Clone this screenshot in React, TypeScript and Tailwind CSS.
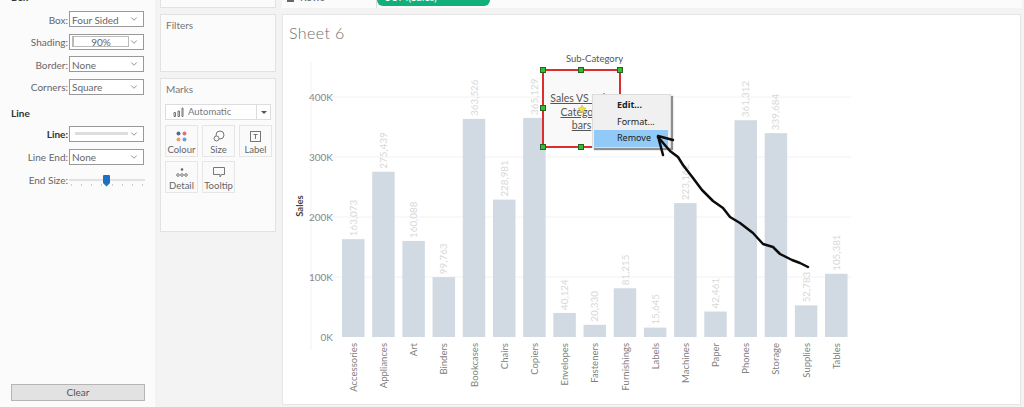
import { ChevronDown } from "lucide-react";

const bars = [
  { name: "Accessories", value: 163073, label: "163,073" },
  { name: "Appliances", value: 275439, label: "275,439" },
  { name: "Art", value: 160088, label: "160,088" },
  { name: "Binders", value: 99763, label: "99,763" },
  { name: "Bookcases", value: 363526, label: "363,526" },
  { name: "Chairs", value: 228981, label: "228,981" },
  { name: "Copiers", value: 365129, label: "365,129" },
  { name: "Envelopes", value: 40124, label: "40,124" },
  { name: "Fasteners", value: 20330, label: "20,330" },
  { name: "Furnishings", value: 81215, label: "81,215" },
  { name: "Labels", value: 15645, label: "15,645" },
  { name: "Machines", value: 223162, label: "223,162" },
  { name: "Paper", value: 42461, label: "42,461" },
  { name: "Phones", value: 361312, label: "361,312" },
  { name: "Storage", value: 339684, label: "339,684" },
  { name: "Supplies", value: 52783, label: "52,783" },
  { name: "Tables", value: 105381, label: "105,381" },
];

function Select({ label, value, bold }: { label: string; value: React.ReactNode; bold?: boolean }) {
  return (
    <div className="flex h-[16px] items-center">
      <div className={`w-[68px] pr-[1px] pt-[2px] text-right text-[10px] ${bold ? "font-bold text-[#333]" : "text-[#666]"}`}>{label}</div>
      <div className="flex h-[16px] w-[75px] items-center border border-[#999] bg-white pl-[2px] pr-[4px] text-[10px] text-[#666]">
        <div className={`min-w-0 flex-1 ${typeof value === "string" ? "pt-[2px]" : ""}`}>{value}</div>
        <ChevronDown className="h-[10px] w-[10px] text-[#555]" strokeWidth={1.5} />
      </div>
    </div>
  );
}

function LeftPanel() {
  return (
    <div className="relative flex h-full w-[155px] shrink-0 flex-col bg-[#fbfbfb] pl-[1px]">
      <div className="absolute left-[11px] top-[-10px] text-[10px] font-bold text-[#333]">Box</div>
      <div className="mt-[11px] flex flex-col gap-[6.67px]">
        <Select label="Box:" value="Four Sided" />
        <Select label="Shading:" value={<div className="h-[11px] w-[57px] border border-l-2 border-[#bbb] text-center text-[10px] leading-[10px]">90%</div>} />
        <Select label="Border:" value="None" />
        <Select label="Corners:" value="Square" />
      </div>
      <div className="ml-[10px] mt-[11px] h-[14px] text-[10px] font-bold leading-[14px] text-[#333]">Line</div>
      <div className="mt-[6px] flex flex-col gap-[6.67px]">
        <Select label="Line:" bold value={<div className="ml-[3px] h-[3px] w-[53px] bg-[#ddd]" />} />
        <Select label="Line End:" value="None" />
      </div>
      <div className="mt-[6px] flex h-[18px] items-center">
        <div className="w-[68px] pr-[1px] pt-[2px] text-right text-[10px] text-[#666]">End Size:</div>
        <div className="relative h-full w-[76px]">
          <div className="mt-[8px] h-[2px] w-full bg-[#e2e2e2]" />
          <div className="mt-[3px] flex justify-between px-[2px]">
            {Array.from({ length: 8 }).map((_, i) => (
              <div key={i} className="h-[2px] w-[1px] bg-[#ccc]" />
            ))}
          </div>
          <svg className="absolute left-[34px] top-[4px]" width="7" height="12" viewBox="0 0 7 12">
            <path d="M0 1 Q0 0 1 0 H6 Q7 0 7 1 V8 L3.5 11.5 L0 8 Z" fill="#1f70c1" />
          </svg>
        </div>
      </div>
      <div className="flex-1" />
      <div className="mb-[6px] ml-[10px] flex h-[17px] w-[134px] items-center justify-center border border-[#b5b5b5] bg-[#e2e2e2] text-[10px] text-[#555]">Clear</div>
    </div>
  );
}

function MarkButton({ label, icon }: { label: string; icon: React.ReactNode }) {
  return (
    <div className="flex h-[32px] w-[33px] flex-col items-center border border-[#e6e6e6] bg-[#fafafa] pt-[3px] text-[9.5px] leading-[11px] text-[#666]">
      <div className="flex h-[14px] items-center">{icon}</div>
      <div className="mt-[1px] whitespace-nowrap">{label}</div>
    </div>
  );
}

function MarksCard() {
  return (
    <div className="mt-[6px] h-[154px] w-[116px] border border-[#e2e2e2] bg-[#fbfbfb] px-[4px]">
      <div className="ml-[1px] mt-[3px] h-[14px] text-[10px] leading-[14px] text-[#777]">Marks</div>
      <div className="mt-[8px] flex h-[16px] w-[106px] items-center border border-[#ddd] bg-white text-[9.5px] text-[#777]">
        <svg className="ml-[7px]" width="11" height="10" viewBox="0 0 11 10" fill="none" stroke="#777">
          <path d="M1 5.5h1.5v4h-1.5zM5 4h1.5v5.5h-1.5zM9 1h1v8.5h-1z" />
        </svg>
        <span className="ml-[4px] flex-1">Automatic</span>
        <div className="flex h-full w-[14px] items-center justify-center border-l border-[#ddd]">
          <div className="h-0 w-0 border-x-[3px] border-t-[3px] border-x-transparent border-t-[#555]" />
        </div>
      </div>
      <div className="mt-[5px] grid w-[107px] grid-cols-[33px_33px_33px] gap-x-[4px] gap-y-[4px]">
        <MarkButton
          label="Colour"
          icon={
            <svg width="11" height="11" viewBox="0 0 11 11">
              <circle cx="2.5" cy="2.5" r="2" fill="#5c6692" />
              <circle cx="8.5" cy="2.5" r="2" fill="#e0707d" />
              <circle cx="2.5" cy="8.5" r="2" fill="#eea05c" />
              <circle cx="8.5" cy="8.5" r="2" fill="#6a9fd0" />
            </svg>
          }
        />
        <MarkButton
          label="Size"
          icon={
            <svg width="12" height="12" viewBox="0 0 12 12" fill="none" stroke="#777">
              <circle cx="7" cy="5" r="4" fill="#fafafa" />
              <circle cx="3.5" cy="8.5" r="2.5" fill="#fafafa" />
            </svg>
          }
        />
        <MarkButton
          label="Label"
          icon={
            <svg width="11" height="11" viewBox="0 0 11 11" fill="none" stroke="#777">
              <rect x="0.5" y="0.5" width="10" height="10" />
              <path d="M3.5 3.5h4M5.5 3.5v4.5" />
            </svg>
          }
        />
        <MarkButton
          label="Detail"
          icon={
            <svg width="12" height="9" viewBox="0 0 12 9" fill="none" stroke="#777">
              <circle cx="6" cy="1.5" r="1.3" fill="#666" stroke="none" />
              <circle cx="2" cy="7" r="1.3" />
              <circle cx="6" cy="7" r="1.3" />
              <circle cx="10" cy="7" r="1.3" />
            </svg>
          }
        />
        <MarkButton
          label="Tooltip"
          icon={
            <svg width="12" height="11" viewBox="0 0 12 11" fill="none" stroke="#777">
              <path d="M0.5 0.5h11v7h-3l-1.5 2.5v-2.5h-6.5z" />
            </svg>
          }
        />
      </div>
    </div>
  );
}

function Chart() {
  // svg origin sits at page (283, 50)
  const base = 287;
  return (
    <svg width="737" height="352" viewBox="0 0 737 352" className="font-['Lato',sans-serif]">
      <line x1="28" y1="12" x2="28" y2="300" stroke="#f2f2f2" />
      {[400, 300, 200, 100].map((k) => (
        <line key={k} x1="28" x2="568" y1={base - k * 0.6} y2={base - k * 0.6} stroke="#f2f2f2" />
      ))}
      {[400, 300, 200, 100, 0].map((k) => (
        <text key={k} x="50" y={base - k * 0.6 + 3.5} textAnchor="end" fontSize="10" fill="#888">
          {k}K
        </text>
      ))}
      <text transform="translate(20 156) rotate(-90)" textAnchor="middle" fontSize="9.5" fontWeight="700" fill="#444">
        Sales
      </text>
      {bars.map((b, i) => {
        const x = 59 + i * 30.19;
        const h = (b.value / 100000) * 60;
        const cx = x + 11.3;
        return (
          <g key={b.name}>
            <rect x={x} y={base - h} width="22.5" height={h} fill="#d1dae3" />
            <text transform={`translate(${cx + 3.5} ${base - h - 3}) rotate(-90)`} fontSize="9.8" fill="#d8d8d8">
              {b.label}
            </text>
            <text transform={`translate(${cx + 3.5} ${base + 6}) rotate(-90)`} textAnchor="end" fontSize="9.5" fill="#808080">
              {b.name}
            </text>
          </g>
        );
      })}
    </svg>
  );
}

function Handle({ className }: { className: string }) {
  return <div className={`absolute h-[6px] w-[6px] border border-[#2a5f2a] bg-[#2fc02f] ${className}`} />;
}

function TitleBox() {
  return (
    <div className="absolute left-[259px] top-[54px] h-[79px] w-[79px] border-2 border-[#dc2e30] bg-[#f9f9f9] font-['Lato',sans-serif]">
      <div className="absolute left-[-27px] right-[-53px] top-[-18px] text-center text-[9.5px] leading-[12px] text-[#555]">Sub-Category</div>
      <div className="mt-[21px] text-center text-[10.5px] leading-[13.5px] text-[#555] underline">
        Sales VS Sub-
        <br />
        Category
        <br />
        bars
      </div>
      <Handle className="left-[-4px] top-[-4px]" />
      <Handle className="left-[34px] top-[-4px]" />
      <Handle className="right-[-4px] top-[-4px]" />
      <Handle className="left-[-4px] top-[34px]" />
      <Handle className="bottom-[-4px] left-[-4px]" />
      <Handle className="bottom-[-4px] left-[34px]" />
      <svg className="absolute left-[34px] top-[34px]" width="8" height="8" viewBox="0 0 8 8">
        <path d="M4 0 L5.2 2.8 L8 3.2 L5.8 5.2 L6.5 8 L4 6.5 L1.5 8 L2.2 5.2 L0 3.2 L2.8 2.8 Z" fill="#f2e24e" stroke="#b5a838" strokeWidth="0.5" />
      </svg>
    </div>
  );
}

function ContextMenu() {
  return (
    <div className="absolute left-[309px] top-[79px] h-[54px] w-[79px] border border-[#dcdcdc] bg-[#f0f0f0] pt-[2px] font-['Noto_Sans',sans-serif] text-[9px] leading-[16.5px] text-[#222] shadow-[2px_2px_1px_#8f8f8f]">
      <div className="pl-[24px] font-bold">Edit...</div>
      <div className="pl-[24px]">Format...</div>
      <div className="ml-[1px] mr-[2px] bg-[#91c9f7] pl-[23px]">Remove</div>
    </div>
  );
}

// hand-drawn arrow, viewBox in page coordinates
function Scribble() {
  return (
    <svg className="absolute left-0 top-0" width="737" height="389" viewBox="283 15 737 389" fill="none" stroke="#0c0c0c" strokeWidth="2.5" strokeLinecap="round" strokeLinejoin="round">
      <path d="M808 267 L800 263 L792 260 L780 254 L773 247 L763 244 L753 233 L740 223 L730 217 L723 208 L713 201 L702 190 L693 178 L683 165 L678 157 L670 151 L658 137" />
      <path d="M673 140 L658 136 L663 155" />
    </svg>
  );
}

export default function App() {
  return (
    <div className="flex h-[407px] w-[1024px] overflow-hidden bg-[#f3f3f3] font-['Lato',sans-serif]">
      <LeftPanel />
      <div className="ml-[5px] flex w-[116px] shrink-0 flex-col">
        <div className="h-[8px] border-x border-b border-[#e2e2e2] bg-[#fbfbfb]" />
        <div className="mt-[6px] h-[58px] border border-[#e2e2e2] bg-[#fbfbfb] pl-[5px] pt-[3px] text-[10px] leading-[14px] text-[#777]">Filters</div>
        <MarksCard />
      </div>
      <div className="ml-[6px] flex w-[740px] shrink-0 flex-col">
        <div className="flex h-[8px] overflow-hidden bg-[#fbfbfb]">
          <div className="relative h-[8px] w-[95px] border-r border-[#ddd] text-[10.5px] text-[#666]">
            <div className="absolute left-[5px] top-0 h-[2px] w-[7px] bg-[#666]" />
            <span className="absolute left-[18px] top-[-10px]">Rows</span>
          </div>
          <div className="relative h-[6px] w-[113px] rounded-b-[7px] bg-[#10b078] text-[10.5px] text-white">
            <span className="absolute left-[8px] top-[-10px]">SUM(Sales)</span>
          </div>
        </div>
        <div className="relative mt-[6px] h-[391px] w-[739px] border border-[#e6e6e6] bg-white">
          <div className="ml-[6px] mt-[8px] h-[27px] text-[16px] font-light leading-[20px] tracking-[0.4px] text-[#6e6e6e]">Sheet 6</div>
          <Chart />
          <TitleBox />
          <ContextMenu />
          <Scribble />
        </div>
      </div>
    </div>
  );
}
